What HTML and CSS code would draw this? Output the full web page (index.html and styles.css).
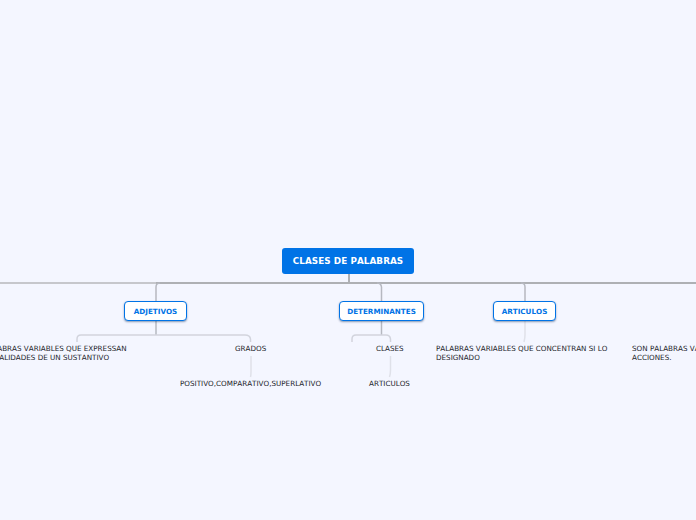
FILE: index.html
```html
<!DOCTYPE html>
<html lang="es">
<head>
<meta charset="utf-8">
<title>CLASES DE PALABRAS</title>
<link rel="stylesheet" href="styles.css">
</head>
<body>
<main class="map">
<svg class="links" width="696" height="520" viewBox="0 0 696 520" fill="none">
<path class="l-main" d="M349 274V283"/>
<path class="l-soft" d="M0 283H156"/>
<path class="l-main" d="M156 283H696"/>
<path class="l-branch" d="M160 283Q156 283 156 287V301"/>
<path class="l-branch" d="M377 283Q381 283 381.500 287V301"/>
<path class="l-branch" d="M521 283Q525 283 525 287V301"/>
<path class="l-branch" d="M156 321V335"/>
<path class="l-branch" d="M381.500 321V335"/>
<path class="l-sub" d="M77 342V339Q77 335 81 335H245Q250 335 250.500 339V342"/>
<path class="l-sub" d="M352 342V339Q352 335 356 335H386Q390 335 390.500 339V342"/>
<path class="l-fade" d="M525 321V335Q525 338 524 342"/>
<path class="l-fade" d="M251 356V372Q251 375 250.500 377"/>
<path class="l-fade" d="M390.500 356V370Q390.500 374 389.500 377"/>
</svg>
<h1 class="node root">CLASES DE PALABRAS</h1>
<div class="node branch b1">ADJETIVOS</div>
<div class="node branch b2">DETERMINANTES</div>
<div class="node branch b3">ARTICULOS</div>
<p class="leaf t1">PALABRAS VARIABLES QUE EXPRESSAN<br><span class="shift">CUALIDADES DE UN SUSTANTIVO</span></p>
<p class="leaf t2">GRADOS</p>
<p class="leaf t3">POSITIVO,COMPARATIVO,SUPERLATIVO</p>
<p class="leaf t4">CLASES</p>
<p class="leaf t5">ARTICULOS</p>
<p class="leaf t6">PALABRAS VARIABLES QUE CONCENTRAN SI LO<br>DESIGNADO</p>
<p class="leaf t7">SON PALABRAS VARIABLES QUE EXPRESAN<br>ACCIONES.</p>
</main>
</body>
</html>
```
FILE: styles.css
```css
html, body { margin: 0; padding: 0; background: #f4f6ff; overflow: hidden; }
.map { position: relative; width: 696px; height: 520px; overflow: hidden; font-family: "DejaVu Sans", sans-serif; font-kerning: none; }
.links { position: absolute; left: 0; top: 0; }
.l-main { stroke: #aeb0b4; stroke-width: 2; }
.l-soft { stroke: #c6c7cc; stroke-width: 2; }
.l-branch { stroke: #b6b8c0; stroke-width: 1.500; }
.l-sub { stroke: #d2d4dd; stroke-width: 1.500; }
.l-fade { stroke: #dfe1e9; stroke-width: 1.500; }
.node { position: absolute; margin: 0; box-sizing: border-box; display: flex; align-items: center; justify-content: center; font-weight: 700; white-space: nowrap; }
.root { left: 282px; top: 248px; width: 132px; height: 26px; background: #0073e6; color: #fff; border-radius: 3px; font-size: 8.800px; letter-spacing: 0.07px; }
.branch { top: 301px; height: 20px; background: #fff; color: #0073e6; border: 1.500px solid #0073e6; border-radius: 4px; box-shadow: 0 1px 2px rgba(0, 40, 90, .45); font-size: 7.200px; }
.b1 { left: 124px; width: 63px; }
.b2 { left: 339px; width: 85px; }
.b3 { left: 493px; width: 63px; }
.leaf { position: absolute; margin: 0; color: #22242a; font-size: 7.200px; line-height: 9px; white-space: nowrap; }
.shift { margin-left: 5px; }
.t1 { left: -16px; top: 344px; }
.t2 { left: 235px; top: 344px; }
.t3 { left: 180px; top: 379px; }
.t4 { left: 376px; top: 344px; }
.t5 { left: 369px; top: 379px; }
.t6 { left: 436px; top: 344px; }
.t7 { left: 632px; top: 344px; }
```
